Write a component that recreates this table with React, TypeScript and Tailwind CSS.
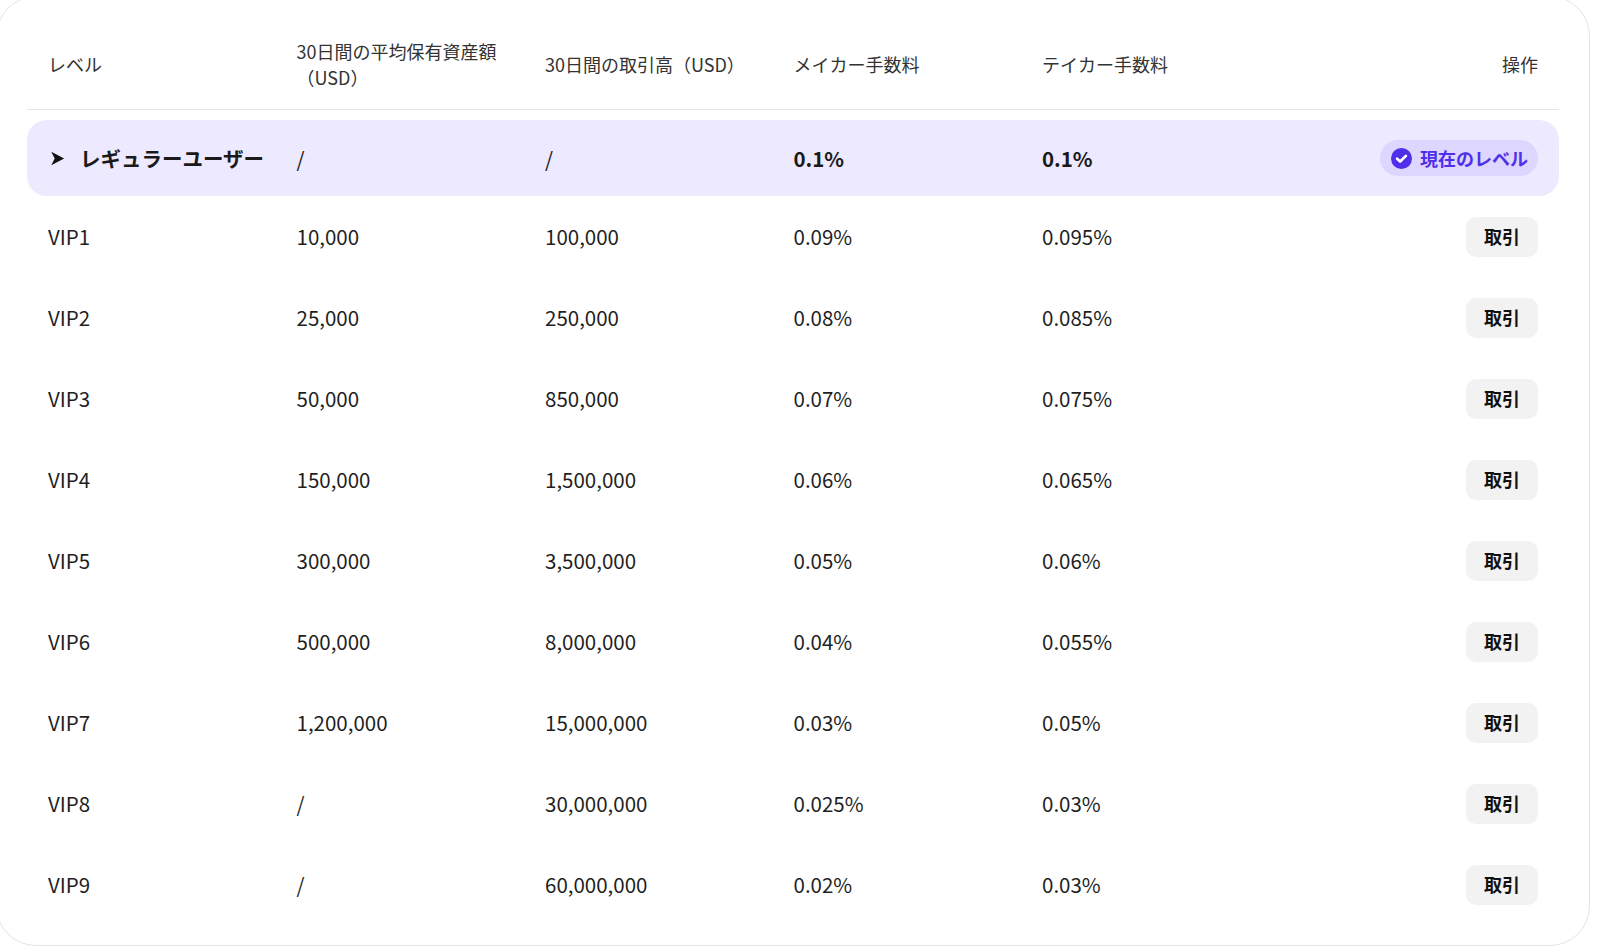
import React from "react";

const rows = [
  ["VIP1", "10,000", "100,000", "0.09%", "0.095%"],
  ["VIP2", "25,000", "250,000", "0.08%", "0.085%"],
  ["VIP3", "50,000", "850,000", "0.07%", "0.075%"],
  ["VIP4", "150,000", "1,500,000", "0.06%", "0.065%"],
  ["VIP5", "300,000", "3,500,000", "0.05%", "0.06%"],
  ["VIP6", "500,000", "8,000,000", "0.04%", "0.055%"],
  ["VIP7", "1,200,000", "15,000,000", "0.03%", "0.05%"],
  ["VIP8", "/", "30,000,000", "0.025%", "0.03%"],
  ["VIP9", "/", "60,000,000", "0.02%", "0.03%"],
];

const headers = [
  "レベル",
  "30日間の平均保有資産額（USD）",
  "30日間の取引高（USD）",
  "メイカー手数料",
  "テイカー手数料",
];

export default function App() {
  return (
    <div
      className="min-h-screen bg-white overflow-hidden"
      style={{ fontFamily: '"Noto Sans CJK JP", "Noto Sans", sans-serif' }}
    >
      <div className="-mt-1 -ml-1 w-[1594px] rounded-[40px] border border-[#e3e3e3] bg-white px-[30px] pt-[23px] pb-[20px]">
        {/* header */}
        <div className="flex h-[90px] items-center border-b border-[#e5e5e5] pb-[2px] text-[18px] leading-[26px] text-[#333333]">
          {headers.map((h) => (
            <div key={h} className="w-[248.5px] shrink-0 pl-[21px] pr-[20px]">
              {h}
            </div>
          ))}
          <div className="flex-1 pr-[21px] text-right">操作</div>
        </div>

        {/* current level row */}
        <div className="mt-[10px] flex h-[76px] items-center rounded-[20px] bg-[#ede9fe] text-[20.5px] font-bold text-[#1a1a1a]">
          <div className="flex w-[248.5px] shrink-0 items-center gap-[15px] pl-[23px]">
            <svg width="15" height="15" viewBox="0 0 14 14" className="shrink-0">
              <path d="M1.2 0.8 L13.2 7 L1.2 13.2 L4.4 7 Z" fill="#111111" />
            </svg>
            <span className="whitespace-nowrap">レギュラーユーザー</span>
          </div>
          <div className="w-[248.5px] shrink-0 pl-[21px] font-normal">/</div>
          <div className="w-[248.5px] shrink-0 pl-[21px] font-normal">/</div>
          <div className="w-[248.5px] shrink-0 pl-[21px]">0.1%</div>
          <div className="w-[248.5px] shrink-0 pl-[21px]">0.1%</div>
          <div className="flex flex-1 justify-end pr-[21px]">
            <div className="flex h-[36px] items-center gap-[8px] rounded-full bg-[#ddd6fe] pl-[11px] pr-[10px] text-[18px] font-bold text-[#4f2fea]">
              <svg width="21" height="21" viewBox="0 0 20 20" className="shrink-0">
                <circle cx="10" cy="10" r="10" fill="#4f2fea" />
                <path
                  d="M5.8 10.2 L8.7 12.9 L14.2 7.5"
                  fill="none"
                  stroke="#ffffff"
                  strokeWidth="2.6"
                  strokeLinecap="round"
                  strokeLinejoin="round"
                />
              </svg>
              <span>現在のレベル</span>
            </div>
          </div>
        </div>

        {/* VIP rows */}
        {rows.map((r) => (
          <div key={r[0]} className="flex h-[81px] items-center text-[20.5px] text-[#1f1f1f]">
            {r.map((c, i) => (
              <div key={i} className="w-[248.5px] shrink-0 pl-[21px]">
                {c}
              </div>
            ))}
            <div className="flex flex-1 justify-end pr-[21px]">
              <button className="flex h-[40px] w-[72px] items-center justify-center rounded-[10px] bg-[#f2f2f2] text-[18px] font-bold text-[#111111]">
                取引
              </button>
            </div>
          </div>
        ))}
      </div>
    </div>
  );
}
